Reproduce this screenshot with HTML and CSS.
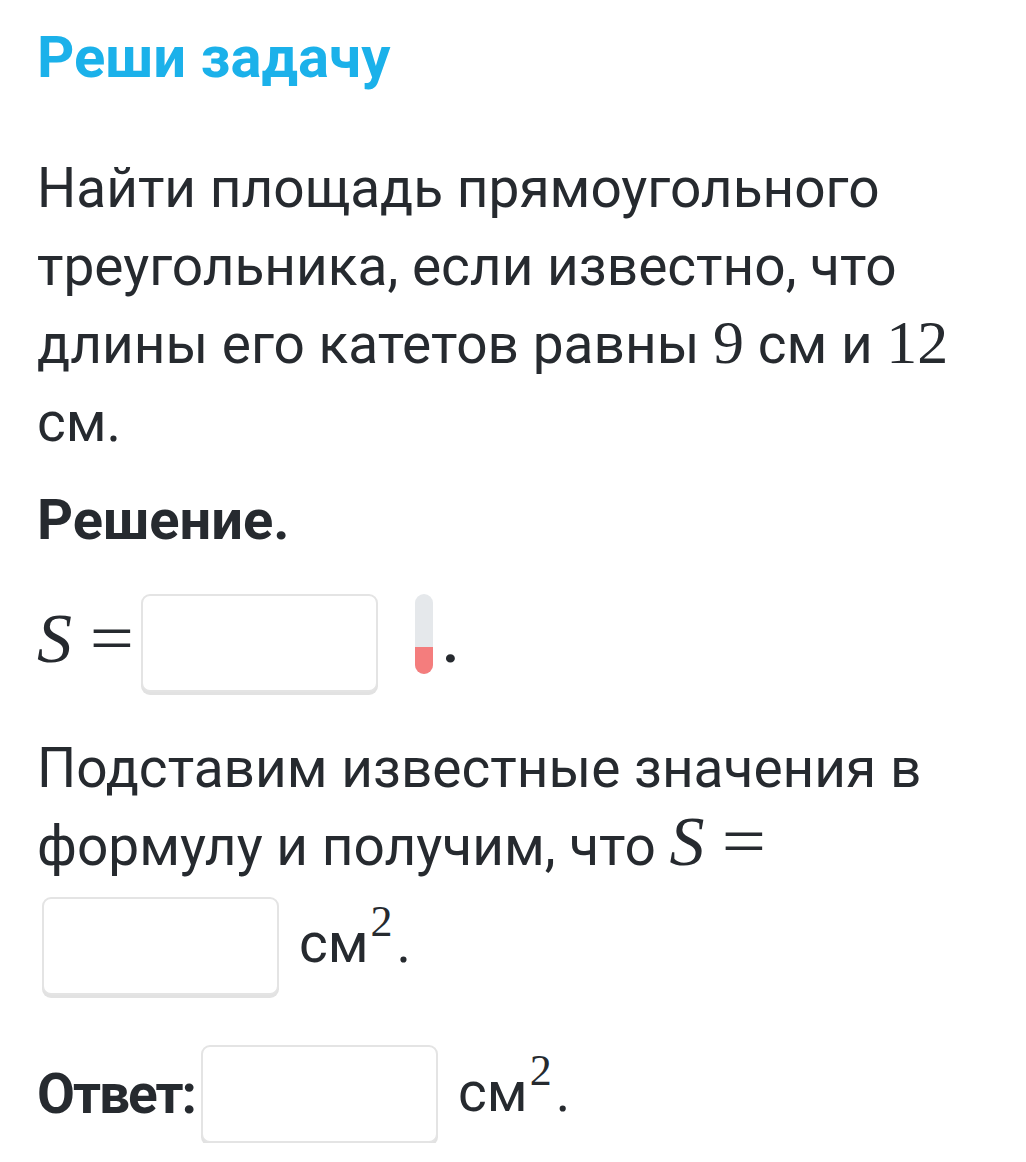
FILE: index.html
```html
<!DOCTYPE html>
<html lang="ru">
<head>
<meta charset="utf-8">
<title>Реши задачу</title>
<link rel="stylesheet" href="styles.css">
</head>
<body>
<main class="page">
  <h1 class="title">Реши задачу</h1>
  <p class="text">Найти площадь прямоугольного треугольника, если известно, что длины его катетов равны <span class="num">9</span> см и <span class="num">12</span> см.</p>
  <h2 class="subtitle">Решение.</h2>
  <div class="row row-formula">
    <span class="math"><i class="var">S</i><span class="eq">=</span></span>
    <span class="field field-a"></span>
    <span class="pill"><span class="pill-fill"></span></span>
    <span class="dot">.</span>
  </div>
  <p class="text text-sub">Подставим известные значения в формулу и получим, что <span class="math"><i class="var">S</i><span class="eq">=</span></span></p>
  <div class="row row-value">
    <span class="field field-b"></span>
    <span class="unit">см<sup class="sup">2</sup>.</span>
  </div>
  <div class="row row-answer">
    <span class="answer-label">Ответ:</span>
    <span class="field field-c"></span>
    <span class="unit">см<sup class="sup">2</sup>.</span>
  </div>
</main>
</body>
</html>
```
FILE: styles.css
```css
html, body {
  margin: 0;
  padding: 0;
  background: #ffffff;
}

.page {
  padding: 18px 37px 0 37px;
  width: 952px;
  font-family: Roboto, "Liberation Sans", sans-serif;
  color: #262a2f;
}

.title {
  margin: 0;
  font-size: 58px;
  line-height: 78px;
  font-weight: 700;
  color: #1bb1ea;
}

.text {
  margin: 53px 0 0 0;
  font-size: 55px;
  line-height: 78px;
  font-weight: 400;
}

.num {
  font-family: "Liberation Serif", serif;
  font-size: 62px;
  line-height: 1;
}

.subtitle {
  margin: 20px 0 0 0;
  font-size: 56px;
  line-height: 78px;
  font-weight: 700;
}

.row {
  display: flex;
  align-items: flex-start;
}

.row-formula {
  margin-top: 35px;
  height: 98px;
}

.math {
  font-family: "Liberation Serif", serif;
  font-size: 70px;
  line-height: 1;
  white-space: nowrap;
}

.row-formula .math {
  line-height: 98px;
  margin-top: -4px;
}

.var {
  font-style: italic;
  margin-right: 16px;
}

.eq {
  display: inline-block;
  margin-left: 4px;
  margin-right: 10px;
  transform: scaleX(1.12);
}

.field {
  display: block;
  width: 233px;
  height: 94px;
  border: 2px solid #e4e4e4;
  border-radius: 9px;
  box-shadow: 0 3px 0 #e2e2e2;
  background: #ffffff;
}

.pill {
  display: flex;
  flex-direction: column;
  justify-content: flex-end;
  width: 18px;
  height: 80px;
  margin-left: 37px;
  border-radius: 9px;
  background: #e5e8eb;
  overflow: hidden;
}

.pill-fill {
  display: block;
  height: 27px;
  background: #f47d7d;
}

.dot {
  margin-left: 9px;
  font-size: 56px;
  line-height: 98px;
  font-weight: 700;
}

.text-sub {
  margin-top: 37px;
}

.row-value {
  margin-top: 12px;
  padding-left: 5px;
}

.unit {
  margin-left: 20px;
  margin-top: 7px;
  font-size: 55px;
  line-height: 78px;
  white-space: nowrap;
}

.sup {
  font-family: "Liberation Serif", serif;
  font-size: 44px;
  vertical-align: 26px;
  line-height: 0;
  margin-left: 2px;
  margin-right: 4px;
}

.row-answer {
  margin-top: 50px;
}

.answer-label {
  font-size: 55px;
  line-height: 78px;
  font-weight: 700;
  letter-spacing: -2px;
  margin-top: 10px;
  margin-right: 6px;
}

.row-answer .unit {
  margin-top: 8px;
}
```
